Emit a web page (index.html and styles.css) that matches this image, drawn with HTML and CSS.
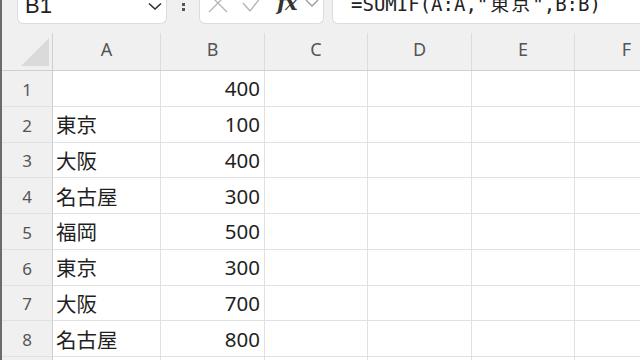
FILE: index.html
```html
<!DOCTYPE html>
<html lang="ja">
<head>
  <meta charset="UTF-8">
  <title>Book1 - Excel</title>
  <link rel="stylesheet" href="styles.css">
</head>
<body>
  <div class="app">
    <div class="formula-bar">
      <div class="name-box">
        <span class="ref">B1</span>
        <svg class="chev" width="14" height="8" viewBox="0 0 14 8"><path d="M1 1.5 L7 7 L13 1.5" fill="none" stroke="#333" stroke-width="1.6"/></svg>
      </div>
      <div class="dots"><span></span><span></span></div>
      <div class="fx-box">
        <svg class="ico-x" width="20" height="14" viewBox="0 0 20 14"><path d="M1 -6 L19 12 M19 -6 L1 12" stroke="#b4b4b4" stroke-width="1.3" fill="none"/></svg>
        <svg class="ico-ok" width="20" height="14" viewBox="0 0 20 14"><path d="M1 3 L8 11 L19 -3" stroke="#b4b4b4" stroke-width="1.3" fill="none"/></svg>
        <span class="fx">fx</span>
        <svg class="ico-dd" width="14" height="8" viewBox="0 0 14 8"><path d="M1 0 L7 6 L13 0" fill="none" stroke="#9a9a9a" stroke-width="1.3"/></svg>
      </div>
      <div class="formula"><span class="formula-text">=SUMIF(A:A,"<span class="wide">東京</span>",B:B)</span></div>
    </div>

    <div class="sheet">
      <div class="corner"><span class="tri"></span></div>
      <div class="col-head">A</div>
      <div class="col-head">B</div>
      <div class="col-head">C</div>
      <div class="col-head">D</div>
      <div class="col-head">E</div>
      <div class="col-head">F</div>

      <div class="row-head">1</div><div class="cell"></div><div class="cell num">400</div><div class="cell"></div><div class="cell"></div><div class="cell"></div><div class="cell"></div>
      <div class="row-head">2</div><div class="cell">東京</div><div class="cell num">100</div><div class="cell"></div><div class="cell"></div><div class="cell"></div><div class="cell"></div>
      <div class="row-head">3</div><div class="cell">大阪</div><div class="cell num">400</div><div class="cell"></div><div class="cell"></div><div class="cell"></div><div class="cell"></div>
      <div class="row-head">4</div><div class="cell">名古屋</div><div class="cell num">300</div><div class="cell"></div><div class="cell"></div><div class="cell"></div><div class="cell"></div>
      <div class="row-head">5</div><div class="cell">福岡</div><div class="cell num">500</div><div class="cell"></div><div class="cell"></div><div class="cell"></div><div class="cell"></div>
      <div class="row-head">6</div><div class="cell">東京</div><div class="cell num">300</div><div class="cell"></div><div class="cell"></div><div class="cell"></div><div class="cell"></div>
      <div class="row-head">7</div><div class="cell">大阪</div><div class="cell num">700</div><div class="cell"></div><div class="cell"></div><div class="cell"></div><div class="cell"></div>
      <div class="row-head">8</div><div class="cell">名古屋</div><div class="cell num">800</div><div class="cell"></div><div class="cell"></div><div class="cell"></div><div class="cell"></div>
      <div class="row-head">9</div><div class="cell"></div><div class="cell"></div><div class="cell"></div><div class="cell"></div><div class="cell"></div><div class="cell"></div>
    </div>
  </div>
</body>
</html>
```

FILE: styles.css
```css
* {
  box-sizing: border-box;
}
body {
  margin: 0;
  padding: 0;
  background: #f0f0f0;
  font-family: "Noto Sans", "Noto Sans CJK JP", sans-serif;
  overflow: hidden;
}
.app {
  width: 640px;
  height: 360px;
  overflow: hidden;
  border-left: 2px solid #6e6a6a;
  background: #f0f0f0;
}
.formula-bar {
  display: flex;
  align-items: flex-start;
  height: 33px;
  background: #f0f0f0;
}
.name-box,
.fx-box,
.formula {
  height: 24px;
  background: #ffffff;
  border: 1px solid #dcdcdc;
  border-top: none;
  border-radius: 0 0 6px 6px;
  overflow: hidden;
}
.name-box {
  display: flex;
  justify-content: space-between;
  width: 150px;
  margin-left: 15px;
  padding: 0 4px 0 7px;
}
.ref {
  font-family: "Liberation Sans", sans-serif;
  font-size: 22px;
  line-height: 20px;
  margin-top: -4px;
  color: #222;
}
.chev {
  margin-top: 2px;
}
.dots {
  display: flex;
  flex-direction: column;
  gap: 2px;
  width: 32px;
  align-items: center;
  padding-top: 3px;
}
.dots span {
  width: 3px;
  height: 3px;
  background: #555;
}
.fx-box {
  display: flex;
  align-items: flex-start;
  width: 125px;
  padding-left: 8px;
}
.ico-x {
  margin-right: 14px;
}
.ico-ok {
  margin-right: 15px;
}
.fx {
  font-family: "DejaVu Serif", "Liberation Serif", serif;
  font-style: italic;
  font-weight: bold;
  font-size: 21px;
  line-height: 20px;
  margin-top: -7px;
  color: #333;
  letter-spacing: -1px;
  margin-right: 8px;
}
.formula {
  flex: 1;
  margin-left: 8px;
  margin-right: -20px;
  padding-left: 18px;
  font-family: "DejaVu Sans Mono", "Noto Sans CJK JP", monospace;
  font-size: 19px;
  line-height: 20px;
  color: #222;
  white-space: nowrap;
}
.formula-text {
  display: block;
  margin-top: -7px;
}
.wide {
  font-family: "Noto Sans CJK JP", sans-serif;
  letter-spacing: 2px;
  padding-left: 2px;
}
.sheet {
  display: grid;
  grid-template-columns: 51px 108px 104px 103px 104px 103px 104px;
  grid-template-rows: 38px repeat(9, 35.75px);
}
.corner {
  display: flex;
  justify-content: flex-end;
  align-items: flex-end;
  padding: 0 3px 4px 0;
  border-right: 1px solid #cfcfcf;
  border-bottom: 1px solid #cfcfcf;
}
.tri {
  width: 28px;
  height: 28px;
  background: #dadada;
  clip-path: polygon(100% 0, 100% 100%, 0 100%);
}
.col-head {
  display: flex;
  justify-content: center;
  align-items: center;
  padding-bottom: 6px;
  font-size: 18px;
  color: #555;
  border-right: 1px solid #dcdcdc;
  border-bottom: 1px solid #cfcfcf;
}
.row-head {
  display: flex;
  justify-content: center;
  align-items: center;
  padding-top: 2px;
  font-size: 17px;
  color: #555;
  border-right: 1px solid #cfcfcf;
  border-bottom: 1px solid #e1e1e1;
}
.cell {
  display: flex;
  align-items: center;
  padding: 0 4px 0 3px;
  background: #ffffff;
  font-size: 20.5px;
  color: #1f1f1f;
  border-right: 1px solid #e1e1e1;
  border-bottom: 1px solid #e1e1e1;
  white-space: nowrap;
}
.num {
  justify-content: flex-end;
}
```
